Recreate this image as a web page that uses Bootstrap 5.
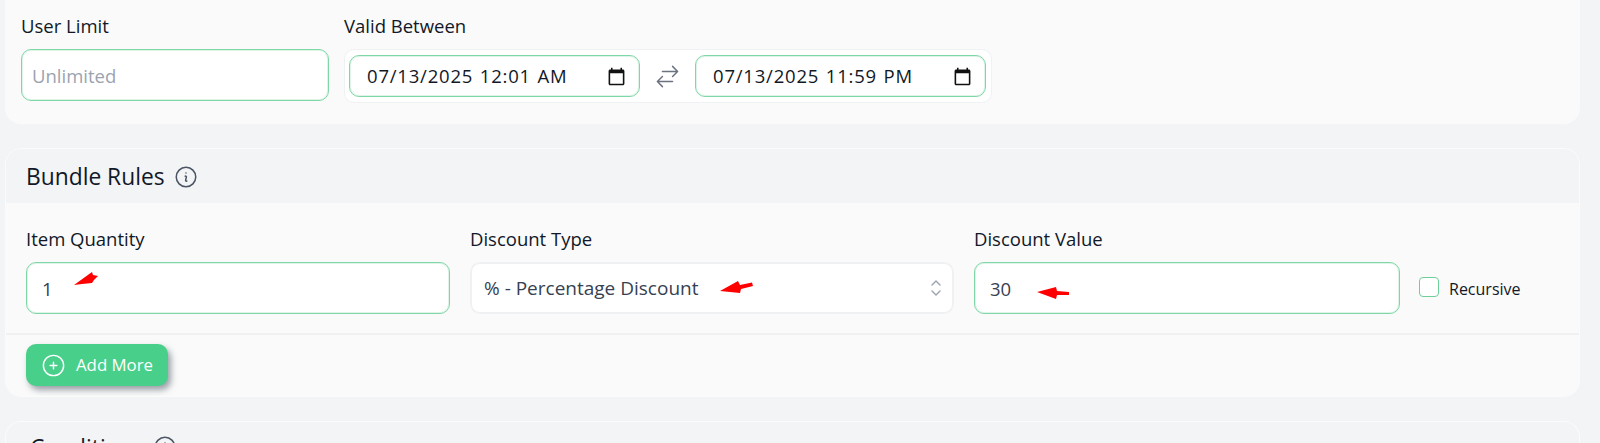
<!DOCTYPE html>
<html lang="en">
<head>
<meta charset="utf-8">
<title>Bundle Rules</title>
<link href="https://cdn.jsdelivr.net/npm/bootstrap@5.3.0/dist/css/bootstrap.min.css" rel="stylesheet">
<style>
html,body{height:443px;overflow:hidden}
body{background:#f3f4f6;font-family:"Open Sans","Noto Sans",sans-serif;color:#1f2937;padding:0 20px 0 5px}
.panel-a{background:#fafafa;border-radius:0 0 16px 16px;height:124px;padding:14px 16px 0;margin-bottom:24px;gap:15px}
.panel-b{background:#fafafa;border:1px solid #fbfbfc;border-radius:16px;height:249px;margin-bottom:24px;overflow:hidden}
.panel-c{background:#f3f4f6;border:1px solid #fbfbfc;border-bottom:0;border-radius:16px 16px 0 0;height:60px;padding:12px 24px}
.panel-head{background:#f3f4f6;height:54px;padding:1px 20px 0;gap:8px}
.panel-title{font-size:22.8px;color:#111827;line-height:28px}
.fld-label{display:block;font-size:18.500px;line-height:24px;color:#111827;margin-bottom:11px}
.fld-input{height:52px;border:1px solid #7fd6a6;border-radius:10px;background:#fff;font-size:18.500px;color:#374151;padding:0 15px;box-shadow:inset 0 0 0 1px rgba(147,220,179,.3)}
.fld-input::placeholder{color:#9ca3af}
.fld-user{width:308px;padding:0 10px}
.range-wrap{width:648px;height:54px;background:#fff;border:1px solid #f0f1f3;border-radius:10px;padding:4px}
.fld-date{width:291px;height:42px;padding:0 13px 0 17px;border:1px solid #7fd6a6;border-radius:10px;background:#fff;flex:none;box-shadow:inset 0 0 0 1px rgba(147,220,179,.3)}
.date-text{font-size:18.500px;letter-spacing:.8px;word-spacing:1px;color:#111827;white-space:nowrap}
.range-arrows{width:55px;flex:none}
.rule-row{padding:24px 20px 0;height:130px}
.col-qty{width:424px;margin-right:20px;flex:none}
.col-type{width:484px;margin-right:20px;flex:none}
.col-val{width:426px;margin-right:19px;flex:none}
.fld-select{height:52px;border:2px solid #f0f1f3;border-radius:10px;font-size:19px;color:#374151;padding:0 12px;background-size:12px 16px;background-position:right 10px center;background-image:url("data:image/svg+xml,%3Csvg xmlns='http://www.w3.org/2000/svg' viewBox='0 0 12 16' fill='none' stroke='%239ca3af' stroke-width='1.4' stroke-linecap='round' stroke-linejoin='round'%3E%3Cpath d='M2 5l4-4 4 4M2 11l4 4 4-4'/%3E%3C/svg%3E")}
.chk-line{margin-top:48px;height:24px}
.chk-box{width:20px;height:20px;margin:0 10px 0 0;border:1.5px solid #6fcf9a;border-radius:5px;background-color:#fff;flex:none}
.chk-text{font-size:16px;color:#111827;line-height:24px;padding-top:4px}
.rule-sep{height:2px;background:#f1f1f2;margin:0}
.foot-row{padding:9px 20px 0}
.add-btn{width:142px;height:42px;background:#48cf8a;border:0;border-radius:10px;color:#fff;font-size:16.800px;padding:0 0 0 14px;gap:9px;box-shadow:3px 4px 6px rgba(75,85,99,.55)}
.arrow-host{position:relative}
.red-arrow{position:absolute;fill:#fe0000}
.ar-1{left:48px;top:10px}
.ar-2{left:250px;top:19px}
.ar-3{left:63px;top:25px}
</style>
</head>
<body>
<section class="panel-a d-flex">
  <div>
    <label class="fld-label" for="ul">User Limit</label>
    <input id="ul" class="form-control fld-input fld-user" placeholder="Unlimited">
  </div>
  <div>
    <label class="fld-label">Valid Between</label>
    <div class="range-wrap d-flex align-items-center">
      <div class="fld-date d-flex align-items-center justify-content-between">
        <span class="date-text">07/13/2025 12:01 AM</span>
        <svg width="19" height="19" viewBox="0 0 24 24" fill="#111"><path d="M20 3h-1V1h-2v2H7V1H5v2H4c-1.100 0-2 .9-2 2v16c0 1.100.9 2 2 2h16c1.100 0 2-.9 2-2V5c0-1.100-.9-2-2-2zm0 18H4V8h16v13z"/></svg>
      </div>
      <div class="range-arrows d-flex justify-content-center">
        <svg width="27" height="27" viewBox="0 0 24 24" fill="none" stroke="#6b7280" stroke-width="1.300" stroke-linecap="round" stroke-linejoin="round"><path d="M7.500 21 3 16.500m0 0L7.500 12M3 16.500h13.500m0-13.500L21 7.500m0 0L16.500 12M21 7.500H7.500"/></svg>
      </div>
      <div class="fld-date d-flex align-items-center justify-content-between">
        <span class="date-text">07/13/2025 11:59 PM</span>
        <svg width="19" height="19" viewBox="0 0 24 24" fill="#111"><path d="M20 3h-1V1h-2v2H7V1H5v2H4c-1.100 0-2 .9-2 2v16c0 1.100.9 2 2 2h16c1.100 0 2-.9 2-2V5c0-1.100-.9-2-2-2zm0 18H4V8h16v13z"/></svg>
      </div>
    </div>
  </div>
</section>
<section class="panel-b">
  <div class="panel-head d-flex align-items-center">
    <span class="panel-title">Bundle Rules</span>
    <svg width="26" height="26" viewBox="0 0 24 24" fill="none" stroke="#4b5563" stroke-width="1.400" stroke-linecap="round" stroke-linejoin="round"><path d="M11.250 11.250l.041-.02a.75.75 0 0 1 1.063.852l-.708 2.836a.75.75 0 0 0 1.063.853l.041-.021M21 12a9 9 0 1 1-18 0 9 9 0 0 1 18 0zm-9-3.750h.008v.008H12V8.250z"/></svg>
  </div>
  <div class="rule-row d-flex">
    <div class="col-qty">
      <label class="fld-label">Item Quantity</label>
      <div class="arrow-host">
        <input class="form-control fld-input" value="1">
        <svg class="red-arrow ar-1" width="25" height="14" viewBox="0 0 25 14"><polygon points="0,13 18,0 19,3 24,4 20,8 18,11 8,12"/></svg>
      </div>
    </div>
    <div class="col-type">
      <label class="fld-label">Discount Type</label>
      <div class="arrow-host">
        <select class="form-select fld-select"><option>% - Percentage Discount</option></select>
        <svg class="red-arrow ar-2" width="33" height="12" viewBox="0 0 33 12"><polygon points="0,10 18,0 20,4 32,1.500 33,5 21,8 20,12"/></svg>
      </div>
    </div>
    <div class="col-val">
      <label class="fld-label">Discount Value</label>
      <div class="arrow-host">
        <input class="form-control fld-input" value="30">
        <svg class="red-arrow ar-3" width="33" height="12" viewBox="0 0 33 12"><polygon points="0,5 19,0 20,4 32,5 32,8 20,8 19,12"/></svg>
      </div>
    </div>
    <div class="chk-line d-flex align-items-center">
      <input class="form-check-input chk-box" type="checkbox" id="rc">
      <label class="chk-text" for="rc">Recursive</label>
    </div>
  </div>
  <hr class="rule-sep border-0 opacity-100">
  <div class="foot-row">
    <button class="btn add-btn d-flex align-items-center" type="button">
      <svg width="27" height="27" viewBox="0 0 24 24" fill="none" stroke="#fff" stroke-width="1.300" stroke-linecap="round" stroke-linejoin="round"><path d="M12 9v6m3-3H9m12 0a9 9 0 1 1-18 0 9 9 0 0 1 18 0z"/></svg>
      Add More
    </button>
  </div>
</section>
<section class="panel-c d-flex align-items-start gap-2">
  <span class="panel-title">Conditions</span>
  <svg width="26" height="26" viewBox="0 0 24 24" fill="none" stroke="#4b5563" stroke-width="1.400" stroke-linecap="round" stroke-linejoin="round"><path d="M11.250 11.250l.041-.02a.75.75 0 0 1 1.063.852l-.708 2.836a.75.75 0 0 0 1.063.853l.041-.021M21 12a9 9 0 1 1-18 0 9 9 0 0 1 18 0zm-9-3.750h.008v.008H12V8.250z"/></svg>
</section>
<script src="https://cdn.jsdelivr.net/npm/bootstrap@5.3.0/dist/js/bootstrap.bundle.min.js"></script>
</body>
</html>
